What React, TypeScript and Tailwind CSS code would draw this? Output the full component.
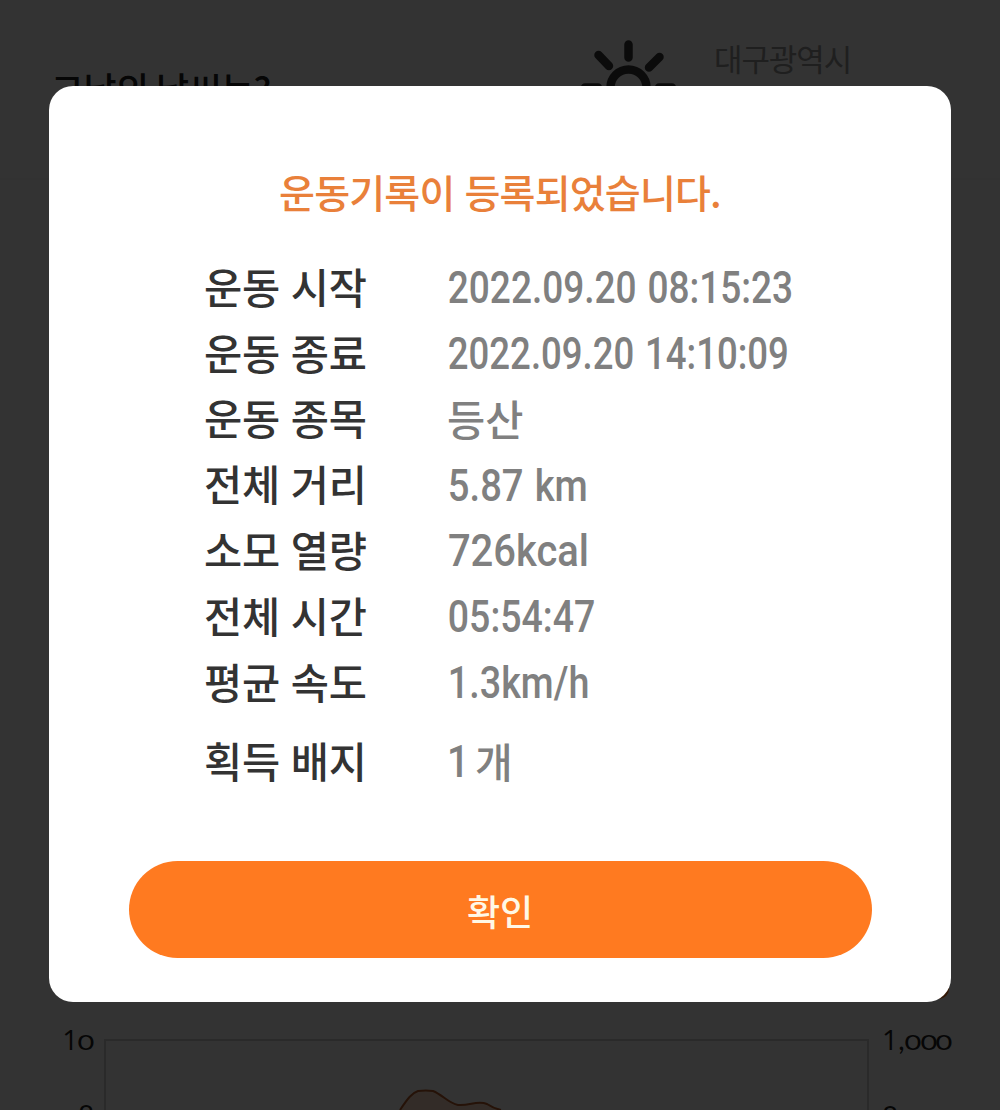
import clsx from 'clsx';

const records = [
    { label: '운동 시작', value: '2022.09.20 08:15:23', squeeze: 'scale-x-[0.822]' },
    { label: '운동 종료', value: '2022.09.20 14:10:09', squeeze: 'scale-x-[0.812]' },
    { label: '운동 종목', value: '등산', korean: true },
    { label: '전체 거리', value: '5.87 km', squeeze: 'scale-x-[0.848]' },
    { label: '소모 열량', value: '726kcal', squeeze: 'scale-x-[0.888]' },
    { label: '전체 시간', value: '05:54:47', squeeze: 'scale-x-[0.832]' },
    { label: '평균 속도', value: '1.3km/h', squeeze: 'scale-x-[0.838]' },
];

function SunIcon() {
    return (
        <svg width="100" height="100" viewBox="0 0 100 100" fill="none" stroke="#3a3a3a" strokeWidth="8.5" strokeLinecap="round">
            <circle cx="50.5" cy="50.5" r="18" />
            <path d="M50.500 7.500v13M50.500 81v13M7 50.500h13M81 50.500h13M20.500 18l10.500 11M81.500 20l-10.500 10.500M20 83l11-12M80 83l-11-12" />
        </svg>
    );
}

function Weather() {
    return (
        <section className="flex h-[180px] items-start border-b-2 border-[#fafafa] pl-[51px]">
            <h2 className="w-[527px] pt-[67px] text-[36px] leading-[42px] font-medium tracking-[-0.6px] text-[#222]">그날의 날씨는?</h2>
            <div className="pt-[37px]"><SunIcon /></div>
            <p className="pt-[37px] pl-[36px] text-[31px] leading-[42px] tracking-[-1.1px] text-[#9a9a9a]">대구광역시</p>
        </section>
    );
}

// Axis numbers use small, round zeros next to taller digits
function AxisNumber({ value }: { value: string }) {
    return (
        <div className="flex h-[30px] items-baseline">
            {value.split('').map((char, i) => (
                <span
                    key={i}
                    className={clsx(
                        'inline-block text-center',
                        char === '0' && 'w-[15.700px] scale-x-[1.35] text-[21.500px]',
                        char === '1' && "w-[16px] font-['Open_Sans',sans-serif] text-[28px]",
                        char === '8' && 'w-[16px] text-[28px]',
                        char === ',' && 'w-[7px] text-[28px]',
                    )}
                >
                    {char}
                </span>
            ))}
        </div>
    );
}

function AltitudeChart() {
    return (
        <section className="relative flex h-[192px] items-start border-t-2 border-[#fdfdfd] pt-[100px] font-['Lato',sans-serif] leading-[30px] text-[#222]">
            <div className="absolute top-[50px] left-[910px] h-[29px] w-[39px] rounded-[10px] bg-[#ff7a20]" />
            <div className="flex w-[94px] flex-col items-end gap-[46px] pt-[4px]">
                <AxisNumber value="10" />
                <AxisNumber value="8" />
            </div>
            <div className="ml-[10px] pt-[19px]">
                <svg width="766" height="71" viewBox="0 0 766 71" fill="none">
                    <path d="M1 71V1h763v70" stroke="#cfcfcf" strokeWidth="2" />
                    <path
                        d="M296 71C304 59 308 54 314 52Q322 51 329 52C339 56 344 64 354 66C366 67 373 61 383 65Q389 69 397 71Z"
                        fill="#ff7a1f"
                        fillOpacity="0.26"
                    />
                    <path d="M296 71C304 59 308 54 314 52Q322 51 329 52C339 56 344 64 354 66C366 67 373 61 383 65Q389 69 397 71" stroke="#b85c28" strokeWidth="2" />
                </svg>
            </div>
            <div className="ml-[12px] flex flex-col gap-[47px] pt-[4px]">
                <AxisNumber value="1,000" />
                <AxisNumber value="800" />
            </div>
        </section>
    );
}

export default function App() {
    return (
        <div className="relative flex h-[1110px] w-[1000px] flex-col justify-between overflow-hidden bg-white font-['Noto_Sans_CJK_KR',sans-serif]">
            <Weather />
            <AltitudeChart />

            {/* Backdrop */}
            <div className="absolute inset-0 flex items-start justify-center bg-black/80 pt-[86px]">
                <div className="flex h-[915.5px] w-[902px] flex-col items-center rounded-[24px] bg-white">
                    <h1 className="mt-[75px] text-[39px] leading-[60px] font-medium tracking-[-0.800px] whitespace-nowrap text-[#e9803a] [word-spacing:2px]">
                        운동기록이 등록되었습니다.
                    </h1>

                    <dl className="mt-[34px] w-full pl-[155px]">
                        {records.map((r) => (
                            <div key={r.label} className="flex h-[65.800px] items-center whitespace-nowrap">
                                <dt className="w-[243px] pb-[4px] text-[41.500px] font-medium tracking-[-0.300px] text-[#333] [word-spacing:2px]">{r.label}</dt>
                                <dd
                                    className={clsx(
                                        'origin-left font-medium text-[#808080]',
                                        r.korean ? 'pb-[2px] text-[41.500px]' : "pl-px font-['Roboto',sans-serif] text-[45px] [word-spacing:2px]",
                                        r.squeeze,
                                    )}
                                >
                                    {r.value}
                                </dd>
                            </div>
                        ))}
                        <div className="mt-[13px] flex h-[65.800px] items-center whitespace-nowrap">
                            <dt className="w-[243px] pb-[2px] text-[41.500px] font-medium tracking-[-0.300px] text-[#333] [word-spacing:2px]">획득 배지</dt>
                            <dd className="flex items-center font-medium text-[#808080]">
                                <span className="w-[28px] origin-left scale-x-[0.87] font-['Roboto',sans-serif] text-[45px]">1</span>
                                <span className="pb-[2px] text-[41px]">개</span>
                            </dd>
                        </div>
                    </dl>

                    <button className="mt-[67px] h-[97px] w-[743px] rounded-full bg-[#ff7a20] text-[36px] font-medium text-[#fff8e6]">확인</button>
                </div>
            </div>
        </div>
    );
}
